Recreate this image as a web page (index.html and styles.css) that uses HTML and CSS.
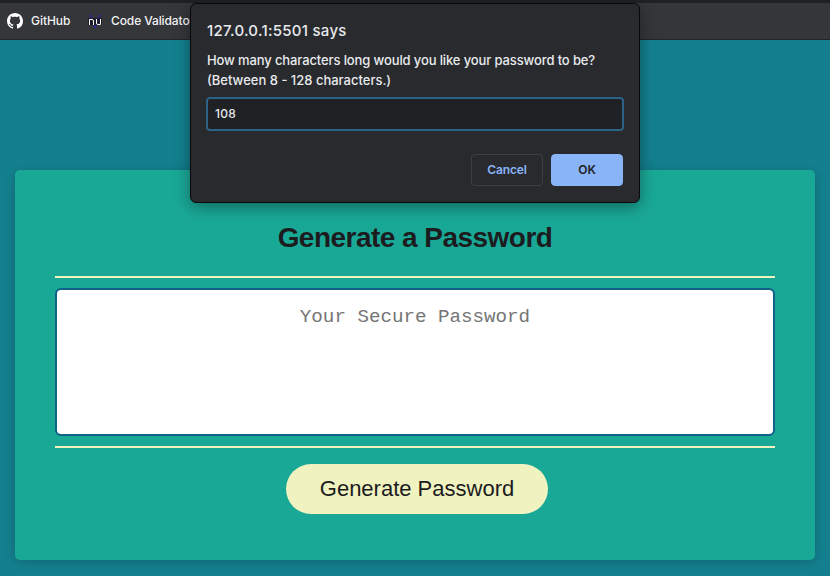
FILE: index.html
```html
<!DOCTYPE html>
<html lang="en">
<head>
<meta charset="utf-8">
<title>Password Generator</title>
<link rel="stylesheet" href="styles.css">
</head>
<body>
<nav class="bookmarks">
  <a class="bookmark github">
    <svg class="icon" viewBox="0 0 16 16" fill="#fff"><path d="M8 0C3.58 0 0 3.58 0 8c0 3.54 2.29 6.53 5.47 7.59.4.07.55-.17.55-.38 0-.19-.01-.82-.01-1.49-2.01.37-2.53-.49-2.69-.94-.09-.23-.48-.94-.82-1.13-.28-.15-.68-.52-.01-.53.63-.01 1.08.58 1.23.82.72 1.21 1.87.87 2.33.66.07-.52.28-.87.51-1.07-1.78-.2-3.64-.89-3.64-3.95 0-.87.31-1.59.82-2.15-.08-.2-.36-1.02.08-2.12 0 0 .67-.21 2.2.82.64-.18 1.32-.27 2-.27s1.36.09 2 .27c1.53-1.04 2.2-.82 2.2-.82.44 1.1.16 1.92.08 2.12.51.56.82 1.27.82 2.15 0 3.07-1.87 3.75-3.65 3.95.29.25.54.73.54 1.48 0 1.07-.01 1.93-.01 2.2 0 .21.15.46.55.38A8.01 8.01 0 0 0 16 8c0-4.42-3.58-8-8-8z"/></svg>
    <span class="label github-label">GitHub</span>
  </a>
  <a class="bookmark">
    <svg class="icon" viewBox="0 0 16 16" fill="none"><path d="M3 1.500 8 14l5-12.500" stroke="#2b2b78" stroke-width="2.500"/><rect x="1" y="5" width="14" height="7" rx="1" fill="#1b1b2c"/><path d="M2.500 12V6.500H5q1.500 0 1.500 1.500v4M9.500 6v4q0 1.500 1.500 1.500h2.500V6" stroke="#fff"/></svg>
    <span class="label validator-label">Code Validator</span>
  </a>
</nav>
<main class="page">
  <section class="card">
    <h2 class="card-title">Generate a Password</h2>
    <textarea class="password" placeholder="Your Secure Password" readonly></textarea>
    <div class="card-footer"><button class="generate">Generate Password</button></div>
  </section>
</main>
<div class="dialog" role="dialog">
  <h1 class="dialog-title">127.0.0.1:5501 says</h1>
  <p class="message"><span class="question">How many characters long would you like your password to be?</span><br>(Between 8 - 128 characters.)</p>
  <input class="length" value="108">
  <div class="actions"><button class="action cancel">Cancel</button><button class="action ok">OK</button></div>
</div>
</body>
</html>
```
FILE: styles.css
```css
* { box-sizing: border-box; }
body {
  margin: 0;
  height: 576px;
  overflow: hidden;
  background: #14808f;
  color: #1c1c1f;
  font-family: "Liberation Sans", Arial, sans-serif;
}
.bookmarks {
  display: flex;
  align-items: center;
  gap: 16px;
  height: 40px;
  padding: 0 7px;
  background: #35363a;
  border-top: 3px solid #202124;
  border-bottom: 1px solid #242529;
}
.bookmark {
  display: flex;
  align-items: center;
  gap: 8px;
  font: 500 12px/16px Inter, sans-serif;
  color: #f1f3f4;
  white-space: nowrap;
}
.icon { width: 16px; height: 16px; flex: none; }
.github-label { width: 40px; letter-spacing: -.05px; }
.validator-label { letter-spacing: -.1px; }
.page { padding: 130px 15px 0; }
.card {
  height: 390px;
  padding: 50px 40px 0;
  background: #1aa896;
  border-radius: 5px;
  box-shadow: 0 2px 12px rgba(0, 0, 0, .2);
}
.card-title {
  height: 58px;
  margin: 0;
  border-bottom: 2px solid #f0f2bf;
  font-size: 28px;
  line-height: 36px;
  letter-spacing: -.53px;
  text-align: center;
}
.password {
  display: block;
  width: 100%;
  height: 148px;
  margin: 10px 0;
  padding: 15px;
  border: 2px solid #106188;
  border-radius: 6px;
  outline: 0;
  resize: none;
  background: #fff;
  font: 19.200px/24px "Liberation Mono", "Courier New", monospace;
  text-align: center;
}
.password::placeholder { color: #757575; }
.card-footer {
  display: flex;
  justify-content: center;
  padding: 16px 0 0 4px;
  border-top: 2px solid #f0f2bf;
}
.generate {
  width: 262px;
  height: 50px;
  padding: 0;
  border: 0;
  border-radius: 25px;
  background: #f0f2bf;
  color: #1c1c1f;
  font: 22px/50px "Liberation Sans", Arial, sans-serif;
}
.dialog {
  position: absolute;
  top: 3px;
  left: 190px;
  width: 450px;
  height: 200px;
  padding: 16px;
  border: 1px solid #08090a;
  border-radius: 6px;
  background: #292a2d;
  box-shadow: 0 4px 16px rgba(0, 0, 0, .38);
  color: #e8eaed;
  font-family: Inter, sans-serif;
}
.dialog-title {
  margin: 0 0 8px;
  font-size: 15px;
  font-weight: 500;
  line-height: 22px;
  letter-spacing: .27px;
}
.message {
  margin: 0;
  font-size: 13px;
  font-weight: 500;
  line-height: 20px;
  white-space: nowrap;
}
.question { letter-spacing: -.12px; }
.length {
  display: block;
  width: 418px;
  height: 34px;
  margin: 7px 0 23px -1px;
  padding: 0 7px 2px;
  border: 2px solid #2b6285;
  border-radius: 4px;
  outline: 0;
  background: #202124;
  color: #e8eaed;
  font: 500 12px Inter, sans-serif;
  letter-spacing: .2px;
}
.actions { display: flex; justify-content: flex-end; gap: 8px; }
.action {
  width: 72px;
  height: 32px;
  padding: 0 0 2px;
  border: 1px solid #3c4043;
  border-radius: 4px;
  font: 600 12px Inter, sans-serif;
  letter-spacing: -.15px;
}
.cancel { background: transparent; color: #8ab4f8; }
.ok { background: #8ab4f8; border-color: #8ab4f8; color: #202124; }
```
